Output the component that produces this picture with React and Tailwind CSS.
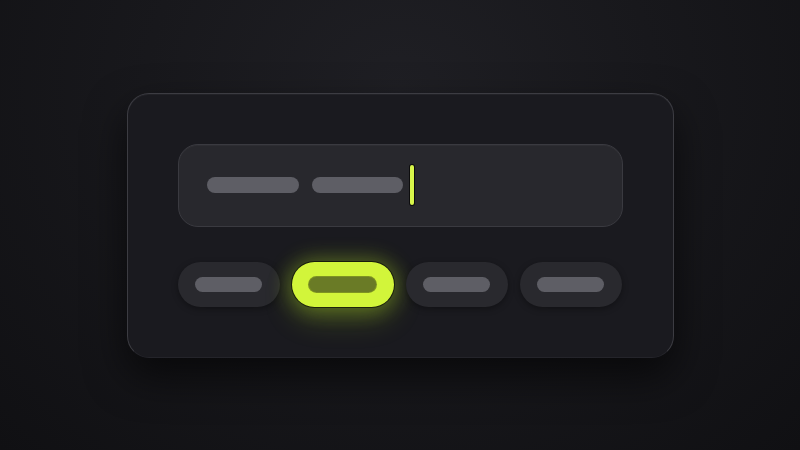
import React from "react";

const Pill = ({ className = "" }) => (
  <span className={`block h-[15px] w-[67px] rounded-full ${className}`} />
);

const ChipButton = ({ active }) =>
  active ? (
    <button className="flex h-[45px] w-[102px] items-center justify-center rounded-full bg-[#d2f53a] ring-1 ring-black/60 shadow-[0_0_20px_4px_rgba(190,240,40,0.3),0_12px_30px_rgba(180,230,30,0.22)]">
      <Pill className="bg-[#6a7b26] ring-1 ring-black/40" />
    </button>
  ) : (
    <button className="flex h-[45px] w-[102px] items-center justify-center rounded-full bg-[#29292e] shadow-[0_2px_6px_rgba(0,0,0,0.35)]">
      <Pill className="bg-[#5e5e65]" />
    </button>
  );

export default function App() {
  const chips = [false, true, false, false];

  return (
    <div className="flex h-screen w-full items-center justify-center bg-[radial-gradient(ellipse_at_50%_20%,#1f1f24_0%,#18181c_45%,#101013_100%)]">
      <div className="flex h-[265px] w-[547px] flex-col rounded-[22px] border border-[#3c3c42] border-b-[#24242a] bg-[#1a1a1f] p-[50px] shadow-[0_18px_40px_rgba(0,0,0,0.6),inset_0_1px_0_rgba(255,255,255,0.04)]">
        {/* text field */}
        <div className="flex h-[83px] items-center gap-[13px] rounded-[20px] border border-[#3a3a40] bg-[#28282d] pl-[28px] shadow-[inset_0_1px_0_rgba(255,255,255,0.03)]">
          <span className="block h-[16px] w-[92px] rounded-full bg-[#5e5e65]" />
          <span className="block h-[16px] w-[91px] rounded-full bg-[#5e5e65]" />
          <span className="-ml-[6px] block h-[40px] w-[4px] rounded-full bg-[#d8f64a] ring-1 ring-black/70" />
        </div>

        {/* chips */}
        <div className="mt-[35px] flex gap-[12px]">
          {chips.map((active, i) => (
            <ChipButton key={i} active={active} />
          ))}
        </div>
      </div>
    </div>
  );
}
